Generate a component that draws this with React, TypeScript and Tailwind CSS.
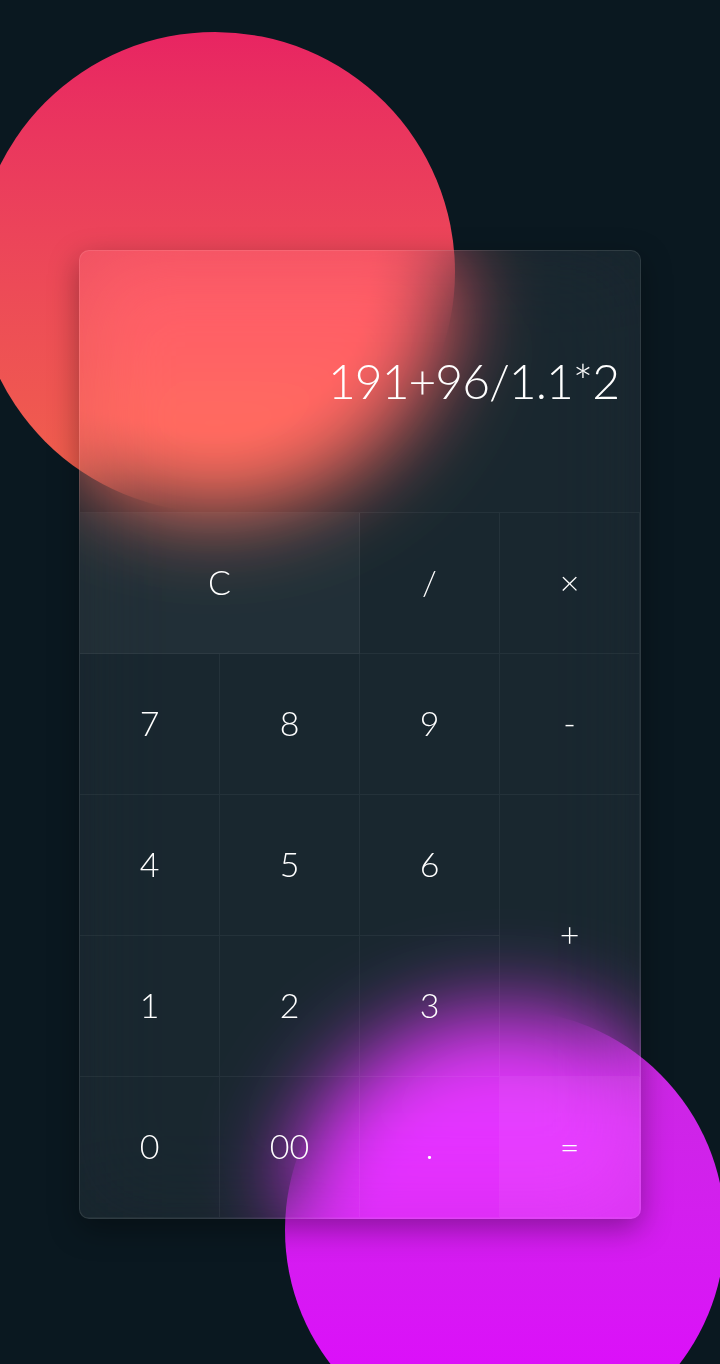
import React from "react";

type Key = { label: string; cls?: string };

const keys: Key[] = [
  { label: "C", cls: "col-span-2 bg-white/[0.04]" },
  { label: "/" },
  { label: "×" },
  { label: "7" },
  { label: "8" },
  { label: "9" },
  { label: "-" },
  { label: "4" },
  { label: "5" },
  { label: "6" },
  { label: "+", cls: "row-span-2" },
  { label: "1" },
  { label: "2" },
  { label: "3" },
  { label: "0" },
  { label: "00" },
  { label: "." },
  { label: "=", cls: "bg-white/[0.05]" },
];

export default function App() {
  return (
    <div
      className="relative min-h-screen overflow-hidden bg-[#0a1820] pt-[250px] pl-[79px]"
      style={{ fontFamily: "Lato, 'Open Sans', sans-serif" }}
    >
      {/* background blobs */}
      <div className="absolute left-[-25px] top-[32px] h-[480px] w-[480px] rounded-full bg-gradient-to-b from-[#e82462] to-[#f1624a]" />
      <div className="absolute left-[285px] top-[1010px] h-[440px] w-[440px] rounded-full bg-gradient-to-b from-[#c82ae0] to-[#e000ff]" />

      <div className="relative w-[562px] overflow-hidden rounded-[10px] border border-white/10 bg-white/[0.06] shadow-[0_10px_30px_rgba(0,0,0,0.35)] backdrop-blur-[44px] backdrop-brightness-[1.1]">
        <div className="flex h-[261px] items-center justify-end px-[21px] pb-[2px]">
          <span className="text-[48px] font-light tracking-[-1px] text-white">
            191+96/1.1*2
          </span>
        </div>
        <div className="grid grid-cols-4 auto-rows-[141px] border-t border-white/5">
          {keys.map((k) => (
            <button
              key={k.label}
              className={`flex items-center justify-center border-r border-b border-white/5 pb-[4px] text-[34px] font-light text-white ${k.cls ?? ""}`}
            >
              {k.label}
            </button>
          ))}
        </div>
      </div>
    </div>
  );
}
